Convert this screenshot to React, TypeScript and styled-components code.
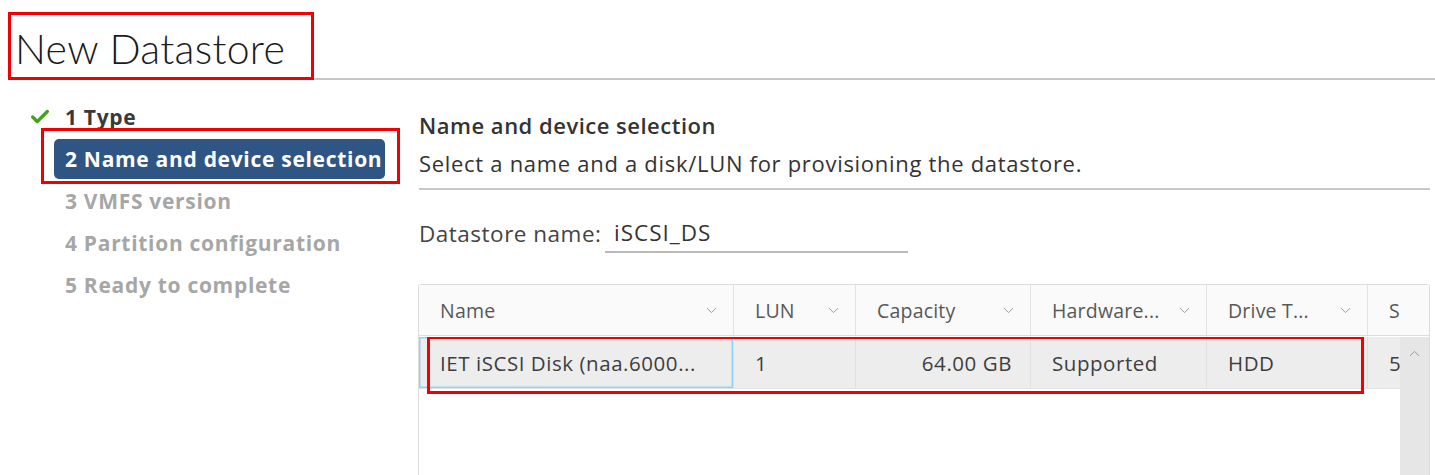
import React from "react"
import styled, { createGlobalStyle } from "styled-components"
import { Check, ChevronDown, ChevronUp } from "lucide-react"

const GlobalStyle = createGlobalStyle`
	html, body {
		margin: 0;
		padding: 0;
		background: #ffffff;
		overflow: hidden;
	}

	body {
		font-family: "Open Sans", "Noto Sans", sans-serif;
		color: #333;
	}
`

type Column = { label: string, width: number, align?: "left" | "right" }

const columns: Column[] = [
	{ label: "Name", width: 315 },
	{ label: "LUN", width: 122 },
	{ label: "Capacity", width: 175, align: "right" },
	{ label: "Hardware...", width: 176 },
	{ label: "Drive T...", width: 161 },
	{ label: "S", width: 61 },
]

const row = ["IET iSCSI Disk (naa.6000...", "1", "64.00 GB", "Supported", "HDD", "5"]

const steps = [
	{ label: "1 Type", state: "done" },
	{ label: "2 Name and device selection", state: "active" },
	{ label: "3 VMFS version", state: "todo" },
	{ label: "4 Partition configuration", state: "todo" },
	{ label: "5 Ready to complete", state: "todo" },
]

const gridTemplate = columns.map(c => `${c.width}px`).join(" ")

const App = () => {

	return (

		<Page>

			<GlobalStyle />

			<Header>

				<TitleBox>
					<Title>New Datastore</Title>
				</TitleBox>

			</Header>

			<Body>

				<Steps>

					{steps.map(step => (

						<StepItem key={step.label} state={step.state}>

							{step.state === "done" && (
								<CheckMark><Check size={22} strokeWidth={3.6} /></CheckMark>
							)}

							{step.label}

							{step.state === "active" && <Callout className="step" />}

						</StepItem>

					))}

				</Steps>

				<Content>

					<SectionTitle>Name and device selection</SectionTitle>

					<SectionText>Select a name and a disk/LUN for provisioning the datastore.</SectionText>

					<Divider />

					<NameField>

						<FieldLabel>Datastore name:</FieldLabel>

						<FieldInput>iSCSI_DS</FieldInput>

					</NameField>

					<Grid>

						<HeadRow>

							{columns.map((col, i) => (

								<HeadCell key={col.label} last={i === columns.length - 1}>

									<span>{col.label}</span>

									{i < columns.length - 1 && <ChevronDown size={17} strokeWidth={1.4} />}

								</HeadCell>

							))}

						</HeadRow>

						<GridBody>

							<RowArea>

								<DataRow>

									{row.map((value, i) => (

										<DataCell key={i} focused={i === 0} align={columns[i].align}>
											{value}
										</DataCell>

									))}

								</DataRow>

								<Callout className="row" />

							</RowArea>

							<ScrollBar>
								<ChevronUp size={17} strokeWidth={1.4} />
							</ScrollBar>

						</GridBody>

					</Grid>

				</Content>

			</Body>

		</Page>

	)

}

const Page = styled.div`
	width: 1435px;
	height: 475px;
	overflow: hidden;
`

const Header = styled.div`
	margin-left: 8px;
	padding-top: 12px;
	border-bottom: 2px solid #c6c6c6;
`

const TitleBox = styled.div`
	display: inline-block;
	width: 306px;
	height: 68px;
	margin-bottom: -2px;
	border: 3px solid #f00000;
	box-sizing: border-box;
	padding: 14px 0 0 4px;
	position: relative;
	z-index: 2;
`

const Title = styled.h1`
	margin: 0;
	font-family: Lato, sans-serif;
	font-weight: 300;
	font-size: 41px;
	line-height: 40px;
	color: #1b1b1b;
	letter-spacing: 0.3px;
`

const Body = styled.div`
	display: flex;
	padding-top: 17px;
`

const Steps = styled.ul`
	list-style: none;
	margin: 0;
	padding: 0 0 0 54px;
	width: 365px;
	flex-shrink: 0;
	display: flex;
	flex-direction: column;
	gap: 2px;
`

const StepItem = styled.li<{ state: string }>`
	position: relative;
	display: flex;
	align-items: center;
	width: 331px;
	height: 40px;
	box-sizing: border-box;
	padding: 0 0 0 11px;
	border-radius: 5px;
	font-family: "Open Sans", sans-serif;
	font-weight: 700;
	font-size: 21px;
	letter-spacing: 0.7px;
	white-space: nowrap;
	color: ${p => p.state === "active" ? "#ffffff" : p.state === "done" ? "#3a3a3a" : "#a6a6a6"};
	background: ${p => p.state === "active" ? "#2f5584" : "transparent"};
`

const CheckMark = styled.span`
	display: flex;
	margin-left: -36px;
	margin-right: 14px;
	color: #43a019;
`

const Callout = styled.div`
	position: absolute;
	border: 3px solid #f00000;
	pointer-events: none;

	&.step {
		inset: -11px -15px -5px -13px;
	}

	&.row {
		left: 8px;
		top: -1px;
		width: 937px;
		height: 58px;
		box-sizing: border-box;
	}
`

const Content = styled.div`
	flex: 1;
	padding-right: 5px;
`

const SectionTitle = styled.div`
	margin-top: 15px;
	font-weight: 600;
	font-size: 22px;
	letter-spacing: 0.5px;
	line-height: 26px;
	color: #333;
`

const SectionText = styled.div`
	margin-top: 12px;
	font-size: 22px;
	letter-spacing: 0.7px;
	line-height: 26px;
	color: #333;
`

const Divider = styled.div`
	margin-top: 12px;
	height: 2px;
	background: #c8c8c8;
`

const NameField = styled.div`
	display: flex;
	align-items: flex-end;
	margin-top: 30px;
	font-size: 22.5px;
	white-space: nowrap;
	color: #444;
`

const FieldLabel = styled.span`
	flex-shrink: 0;
	width: 186px;
	line-height: 26px;
	padding-bottom: 6px;
	letter-spacing: 0.5px;
`

const FieldInput = styled.div`
	flex-shrink: 0;
	width: 294px;
	padding: 0 0 5px 9px;
	line-height: 26px;
	letter-spacing: 1px;
	border-bottom: 2px solid #b9b9b9;
	color: #333;
`

const Grid = styled.div`
	margin-top: 31px;
	margin-left: -1px;
	width: 1010px;
	height: 200px;
	border: 1px solid #dcdcdc;
	border-radius: 3px 3px 0 0;
	display: flex;
	flex-direction: column;
`

const HeadRow = styled.div`
	display: grid;
	grid-template-columns: ${gridTemplate};
	height: 50px;
	background: #fafafa;
	border-bottom: 1px solid #dcdcdc;
`

const HeadCell = styled.div<{ last?: boolean }>`
	display: flex;
	align-items: center;
	justify-content: space-between;
	padding: 0 13px 0 21px;
	font-size: 19.5px;
	letter-spacing: 0.2px;
	color: #585858;
	border-right: ${p => p.last ? "none" : "1px solid #e2e2e2"};

	svg {
		color: #9a9a9a;
	}
`

const GridBody = styled.div`
	flex: 1;
	display: flex;
	padding-top: 1px;
`

const RowArea = styled.div`
	position: relative;
	flex: 1;
	overflow: hidden;
`

const DataRow = styled.div`
	display: grid;
	grid-template-columns: ${gridTemplate};
	height: 51px;
	background: #ededed;
	border-bottom: 1px solid #e2e2e2;
`

const DataCell = styled.div<{ focused?: boolean, align?: string }>`
	display: flex;
	align-items: center;
	justify-content: ${p => p.align === "right" ? "flex-end" : "flex-start"};
	padding: ${p => p.align === "right" ? "0 18px 0 0" : "0 0 0 21px"};
	font-size: 20.5px;
	letter-spacing: 0.55px;
	color: #3e3e3e;
	white-space: nowrap;
	border-right: 1px solid #e0e0e0;
	box-shadow: ${p => p.focused ? "inset 0 0 0 1.5px #8fd4f4" : "none"};
`

const ScrollBar = styled.div`
	width: 29px;
	flex-shrink: 0;
	background: #e6e6e6;
	display: flex;
	justify-content: center;
	padding-top: 8px;

	svg {
		color: #9a9a9a;
	}
`

export default App
